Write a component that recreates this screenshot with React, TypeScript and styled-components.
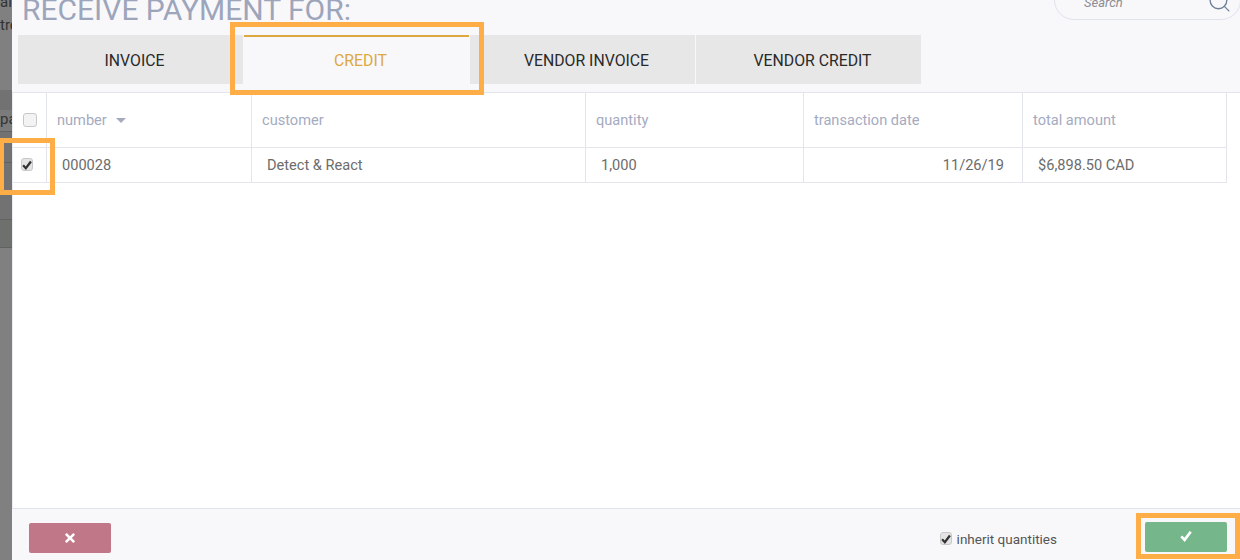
import styled, { createGlobalStyle } from 'styled-components';
import { Search } from 'lucide-react';
import { FaTimes } from 'react-icons/fa';

const GlobalStyle = createGlobalStyle`
  html, body {
    margin: 0;
    padding: 0;
    overflow: hidden;
    font-family: Roboto, "Liberation Sans", sans-serif;
  }
  * {
    box-sizing: border-box;
  }
`;

const columns = [
  { title: 'number', value: '000028', sort: true, width: 205 },
  { title: 'customer', value: 'Detect & React', width: 334 },
  { title: 'quantity', value: '1,000', width: 218 },
  { title: 'transaction date', value: '11/26/19', right: true, width: 219 },
  { title: 'total amount', value: '$6,898.50 CAD', width: 204 },
];

const tabs = ['INVOICE', 'CREDIT', 'VENDOR INVOICE', 'VENDOR CREDIT'];

function CheckGlyph({ size, color }: { size: number; color: string }) {
  return (
    <svg width={size} height={size} viewBox='0 0 12 12' fill='none'>
      <polyline points='1.3,6.4 4.6,9.9 10.7,1.8' stroke={color} strokeWidth='2.7' />
    </svg>
  );
}

export default function App() {
  return (
    <Page>
      <GlobalStyle />
      <Backdrop>
        <BackdropRow $height={11} $tint='transparent'>al</BackdropRow>
        <BackdropRow $height={23} $tint='transparent'>tre</BackdropRow>
        <BackdropRow $height={56} $tint='transparent' />
        <BackdropRow $height={20} $tint='#727272' />
        <BackdropRow $height={22} $tint='#7b7b7b' $lined $pad={3}>pa</BackdropRow>
        <BackdropRow $height={31} $tint='#727272' $lined />
        <BackdropRow $height={28} $tint='#727272' $lined />
        <BackdropRow $height={29} $tint='#727272' $lined />
        <BackdropRow $height={28} $tint='#6e706e' $lined />
      </Backdrop>
      <Modal>
        <Header>
          <Title>RECEIVE PAYMENT FOR:</Title>
          <SearchBox>
            <SearchText>Search</SearchText>
            <SearchIcon size={25} color='#6f7f99' strokeWidth={1.3} />
          </SearchBox>
        </Header>
        <Tabs>
          {tabs.map((tab) => (
            <Tab key={tab} $active={tab === 'CREDIT'}>
              {tab}
            </Tab>
          ))}
        </Tabs>
        <TableArea>
          <HeadRow>
            <CheckCell>
              <FakeCheck />
            </CheckCell>
            {columns.map((col) => (
              <HeadCell key={col.title} $width={col.width}>
                {col.title}
                {col.sort && <SortArrow />}
              </HeadCell>
            ))}
          </HeadRow>
          <BodyRow>
            <CheckCell>
              <RowCheck>
                <CheckGlyph size={10} color='#333' />
              </RowCheck>
            </CheckCell>
            {columns.map((col) => (
              <BodyCell key={col.title} $width={col.width} $right={col.right}>
                {col.value}
              </BodyCell>
            ))}
          </BodyRow>
        </TableArea>
        <Footer>
          <ActionButton $color='#c07787'>
            <FaTimes size={14} color='#fff' />
          </ActionButton>
          <FooterRight>
            <Inherit>
              <SmallCheck>
                <CheckGlyph size={10} color='#333' />
              </SmallCheck>
              inherit quantities
            </Inherit>
            <ConfirmButton $color='#75b68b'>
              <CheckGlyph size={12} color='#fff' />
            </ConfirmButton>
          </FooterRight>
        </Footer>
      </Modal>
      <Highlight $left={230} $top={22} $width={254} $height={73} />
      <Highlight $left={-1} $top={138} $width={56} $height={57} />
      <Highlight $left={1136} $top={513} $width={104} $height={46} />
    </Page>
  );
}

const Page = styled.div`
  position: relative;
  width: 1240px;
  height: 560px;
  display: flex;
  overflow: hidden;
`;

const Backdrop = styled.div`
  width: 12px;
  flex-shrink: 0;
  background-color: #808080;
  overflow: hidden;
`;

const BackdropRow = styled.div<{ $height: number; $tint: string; $lined?: boolean; $pad?: number }>`
  height: ${(props) => props.$height}px;
  padding-bottom: ${(props) => props.$pad || 0}px;
  display: flex;
  align-items: flex-end;
  font-size: 15px;
  line-height: 18px;
  white-space: nowrap;
  color: #333;
  background-color: ${(props) => props.$tint};
  border-bottom: ${(props) => (props.$lined ? '1px solid #626262' : 'none')};
`;

const Modal = styled.div`
  flex: 1;
  display: flex;
  flex-direction: column;
  background-color: #f8f8fb;
`;

const Header = styled.div`
  height: 35px;
  padding-left: 10px;
  display: flex;
  justify-content: space-between;
  align-items: flex-end;
`;

const Title = styled.h1`
  margin: 0 0 7px;
  font-size: 30px;
  line-height: 36px;
  font-weight: 400;
  color: #9da5bb;
`;

const SearchBox = styled.div`
  width: 187px;
  height: 40px;
  margin: 0 -1px 15px 0;
  padding: 0 8px 0 29px;
  display: flex;
  justify-content: space-between;
  align-items: flex-end;
  border: 1px solid #dfe3ec;
  border-radius: 20px;
`;

const SearchText = styled.span`
  font-size: 13px;
  font-style: italic;
  line-height: 33px;
  color: #8d8d94;
`;

const SearchIcon = styled(Search)`
  margin-bottom: 5px;
`;

const Tabs = styled.div`
  height: 58px;
  padding-left: 6px;
  display: flex;
  gap: 1px;
  border-bottom: 1px solid #e2e5ec;
`;

const Tab = styled.div<{ $active?: boolean }>`
  width: 225px;
  height: 49px;
  padding: ${(props) => (props.$active ? '0' : '1px')} 0 0 8px;
  display: flex;
  align-items: center;
  justify-content: center;
  font-size: 15.8px;
  color: ${(props) => (props.$active ? '#dca83f' : '#2a2a2a')};
  background-color: ${(props) => (props.$active ? 'transparent' : '#e7e7e7')};
  border-top: ${(props) => (props.$active ? '2px solid #dca83f' : 'none')};
`;

const TableArea = styled.div`
  flex: 1;
  background-color: #fff;
  border-left: 1px solid #e8ecf2;
`;

const HeadRow = styled.div`
  height: 55px;
  display: flex;
  border-bottom: 1px solid #e2e5ec;
  width: 1214px;
`;

const BodyRow = styled.div`
  height: 35px;
  display: flex;
  border-bottom: 1px solid #e2e5ec;
  width: 1214px;
`;

const CheckCell = styled.div`
  width: 34px;
  flex-shrink: 0;
  display: flex;
  align-items: center;
  justify-content: center;
  border-right: 1px solid #e2e5ec;
`;

const HeadCell = styled.div<{ $width: number }>`
  width: ${(props) => props.$width}px;
  flex-shrink: 0;
  padding-left: 10px;
  display: flex;
  align-items: center;
  font-size: 14.6px;
  color: #a5abbf;
  border-right: 1px solid #e2e5ec;
`;

const BodyCell = styled.div<{ $width: number; $right?: boolean }>`
  width: ${(props) => props.$width}px;
  flex-shrink: 0;
  padding: 0 18px 0 15px;
  display: flex;
  align-items: center;
  justify-content: ${(props) => (props.$right ? 'flex-end' : 'flex-start')};
  font-size: 14.6px;
  color: #6c6c6c;
  border-right: 1px solid #e2e5ec;
`;

const SortArrow = styled.span`
  width: 0;
  height: 0;
  margin-left: 9px;
  border-left: 5px solid transparent;
  border-right: 5px solid transparent;
  border-top: 5px solid #a5abbf;
`;

const FakeCheck = styled.span`
  width: 14px;
  height: 14px;
  margin-left: 1px;
  display: flex;
  align-items: center;
  justify-content: center;
  border: 1px solid #c8c8c8;
  border-radius: 3px;
  background-color: #f3f3f3;
`;

const RowCheck = styled(FakeCheck)`
  width: 12px;
  height: 13px;
  margin: 0 5px 1px 0;
  background-color: #e4e4e4;
`;

const SmallCheck = styled(FakeCheck)`
  width: 12px;
  height: 13px;
  margin: 0 5px 0 0;
  background-color: #e4e4e4;
`;

const Footer = styled.div`
  height: 52px;
  padding: 14px 13px 0 17px;
  display: flex;
  justify-content: space-between;
  align-items: flex-start;
  border-top: 1px solid #dfe4ec;
`;

const FooterRight = styled.div`
  display: flex;
  align-items: center;
  gap: 88px;
`;

const Inherit = styled.label`
  display: flex;
  align-items: center;
  font-size: 13.5px;
  padding-top: 2px;
  color: #555;
`;

const ActionButton = styled.button<{ $color: string }>`
  width: 82px;
  height: 30px;
  padding: 0;
  display: flex;
  align-items: center;
  justify-content: center;
  border: none;
  border-radius: 2px;
  background-color: ${(props) => props.$color};
`;

const ConfirmButton = styled(ActionButton)`
  margin-top: -1px;
  padding-bottom: 2px;
`;

const Highlight = styled.div<{ $left: number; $top: number; $width: number; $height: number }>`
  position: absolute;
  left: ${(props) => props.$left}px;
  top: ${(props) => props.$top}px;
  width: ${(props) => props.$width}px;
  height: ${(props) => props.$height}px;
  border: 5px solid #ffad47;
`;
